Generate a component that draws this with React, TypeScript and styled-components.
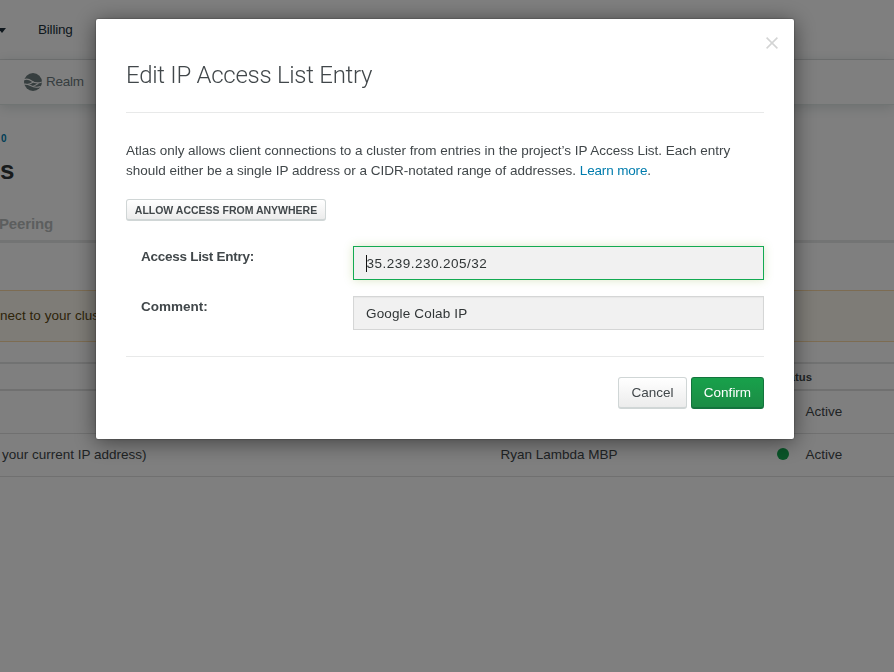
import React from "react";
import styled, { createGlobalStyle } from "styled-components";

const GlobalStyle = createGlobalStyle`
  * { box-sizing: border-box; }
  html, body { margin: 0; height: 100%; overflow: hidden; }
  body {
    background: #fff;
    color: #41474a;
    font-family: "Liberation Sans", Arial, sans-serif;
    font-size: 13.5px;
    line-height: 20px;
  }
`;

const Page = styled.div`
  width: 894px;
  height: 672px;
  overflow: hidden;
  white-space: nowrap;
`;

const TopBar = styled.header`
  display: flex;
  align-items: center;
  gap: 32px;
  height: 60px;
  border-bottom: 1px solid #e2e3e4;
  color: #21313c;
`;

const CaretDown = styled.svg`
  display: block;
  width: 6px;
  height: 5px;
  margin-top: 2px;
`;

const NavItem = styled.span`
  letter-spacing: -0.2px;
`;

const ProductBar = styled.nav`
  display: flex;
  align-items: center;
  gap: 4px;
  height: 45px;
  padding: 0 0 1px 24px;
  border-bottom: 1px solid #e0e8e6;
  box-shadow: 0 2px 12px rgba(50, 80, 80, 0.2);
  color: #6d7b80;
`;

const ProductName = styled.span`
  letter-spacing: -0.25px;
`;

const Heading = styled.section`
  display: flex;
  flex-direction: column;
  height: 138px;
  padding-top: 24px;
  border-bottom: 3px solid #e7e8e8;
`;

const Crumb = styled.span`
  height: 20px;
  padding-left: 1px;
  color: #007cad;
  font-size: 10px;
  font-weight: 700;
`;

const PageTitle = styled.h1`
  height: 28px;
  margin: 7px 0 0;
  color: #313739;
  font-size: 26px;
  font-weight: 700;
  line-height: 28px;
`;

const Tab = styled.span`
  margin: 30px 0 0 -1px;
  color: #b9bdbd;
  font-size: 15px;
  font-weight: 700;
  letter-spacing: -0.15px;
`;

const Notice = styled.div`
  margin-top: 47px;
  height: 52px;
  padding-top: 15px;
  border: solid #fbd9a5;
  border-width: 1px 0;
  background: #fdf9ee;
  color: #5c4813;
  letter-spacing: 0.05px;
`;

const Table = styled.div`
  margin-top: 20px;
  border-top: 2px solid #e3e4e4;
`;

const Row = styled.div<{ $header?: boolean }>`
  display: grid;
  grid-template-columns: 500.5px 276px 29px 1fr;
  align-items: center;
  height: ${(p) => (p.$header ? 27 : 43)}px;
  border-bottom: ${(p) => (p.$header ? 2 : 1)}px solid #e0e1e1;
`;

const HeadCell = styled.span`
  grid-column: 3 / 5;
  padding-left: 1px;
  font-size: 11.3px;
  font-weight: 700;
`;

const Cell = styled.span<{ $indent?: number }>`
  padding-left: ${(p) => p.$indent ?? 0}px;
`;

const Dot = styled.span`
  width: 12px;
  height: 12px;
  margin-top: -2px;
  border-radius: 50%;
  background: #13aa52;
`;

const Backdrop = styled.div`
  position: fixed;
  inset: 0;
  display: flex;
  align-items: flex-start;
  padding: 19px 0 0 96px;
  background: rgba(0, 0, 0, 0.5);
`;

const Dialog = styled.div`
  position: relative;
  width: 698px;
  height: 420px;
  padding: 0 30px;
  border-radius: 2px;
  background: #fff;
  box-shadow: 0 3px 22px rgba(0, 0, 0, 0.5), 0 0 2px rgba(0, 0, 0, 0.5);
`;

const CloseButton = styled.button`
  position: absolute;
  top: 18px;
  right: 16px;
  width: 12px;
  height: 12px;
  padding: 0;
  border: 0;
  background: none;
`;

const CloseIcon = styled.svg`
  display: block;
`;

const DialogHeader = styled.div`
  height: 94px;
  padding-top: 41px;
  border-bottom: 1px solid #e8e9e9;
`;

const DialogTitle = styled.h2`
  margin: 0;
  font-family: Roboto, "Liberation Sans", sans-serif;
  font-size: 24px;
  font-weight: 300;
  line-height: 30px;
  letter-spacing: -0.28px;
`;

const Description = styled.p`
  margin: 28px 0 0;
  white-space: nowrap;
`;

const Line = styled.span<{ $track: number }>`
  display: block;
  letter-spacing: ${(p) => p.$track}px;
`;

const Link = styled.a`
  color: #007cad;
  letter-spacing: -0.15px;
`;

const Button = styled.button<{ $primary?: boolean; $width: number }>`
  width: ${(p) => p.$width}px;
  height: 32px;
  padding: 0;
  border: 1px solid ${(p) => (p.$primary ? "#13743d" : "#d0d6d6")};
  border-bottom-width: 2px;
  border-radius: 3px;
  background: ${(p) =>
    p.$primary
      ? "linear-gradient(#18a14b, #1b8c45)"
      : "linear-gradient(#ffffff, #ececec)"};
  color: ${(p) => (p.$primary ? "#fff" : "#41474a")};
  font: 13.5px/28px "Liberation Sans", Arial, sans-serif;
  letter-spacing: 0;
`;

const SmallButton = styled(Button)`
  display: block;
  height: 22px;
  margin-top: 18px;
  font: 700 10.5px/18px "Liberation Sans", Arial, sans-serif;
  white-space: nowrap;
`;

const Form = styled.div`
  display: grid;
  gap: 16px;
  height: 110px;
  margin-top: 25px;
  padding-left: 15px;
  align-content: start;
`;

const Field = styled.label`
  display: grid;
  grid-template-columns: 212px 411px;
  height: 34px;
`;

const Label = styled.span<{ $track: number }>`
  padding-top: 1px;
  font-weight: 700;
  letter-spacing: ${(p) => p.$track}px;
`;

const Value = styled.span<{ $focused?: boolean; $track: number }>`
  display: flex;
  align-items: center;
  height: 34px;
  padding: 2px 12px 0;
  border: 1px solid ${(p) => (p.$focused ? "#13aa52" : "#d5d6d6")};
  background: #f1f1f1;
  box-shadow: ${(p) =>
    p.$focused
      ? "0 0 9px rgba(130, 170, 50, 0.28)"
      : "inset 0 1px 1px rgba(0, 0, 0, 0.04)"};
  color: #303536;
  letter-spacing: ${(p) => p.$track}px;
`;

const InsertionPoint = styled.span`
  width: 1px;
  height: 17px;
  margin: -2px -0.5px 0 0;
  background: #111;
`;

const Footer = styled.div`
  display: flex;
  justify-content: flex-end;
  gap: 4px;
  padding-top: 20px;
  border-top: 1px solid #e8e9e9;
`;

const RealmIcon = () => (
  <svg width="18" height="18" viewBox="0 0 18 18">
    <circle cx="9" cy="9" r="9" fill="#6d7d7e" />
    <g fill="none" stroke="#fff" strokeWidth="1.1">
      <path d="M-1 7.2C2.5 5.2 5 6 8 8.2S13.5 10.8 19 8.6" />
      <path d="M-1 11.4C2 10.6 4 11.2 6.5 12.6S12.5 15 16.5 13.4" />
      <path d="M3.5 11.2C6.5 11.2 7.5 9.6 9.6 9M8.8 13.2C11 13.2 12 11.4 14.4 10.4" />
    </g>
  </svg>
);

export default function App() {
  return (
    <>
      <GlobalStyle />
      <Page>
        <TopBar>
          <CaretDown viewBox="0 0 6 5">
            <path d="M-2 0H6L2 5Z" fill="#21313c" />
          </CaretDown>
          <NavItem>Billing</NavItem>
        </TopBar>
        <ProductBar>
          <RealmIcon />
          <ProductName>Realm</ProductName>
        </ProductBar>
        <Heading>
          <Crumb>0</Crumb>
          <PageTitle>s</PageTitle>
          <Tab>Peering</Tab>
        </Heading>
        <Notice>nect to your cluster</Notice>
        <Table>
          <Row $header>
            <HeadCell>Status</HeadCell>
          </Row>
          <Row>
            <Cell />
            <Cell />
            <Dot />
            <Cell>Active</Cell>
          </Row>
          <Row>
            <Cell $indent={2}>your current IP address)</Cell>
            <Cell>Ryan Lambda MBP</Cell>
            <Dot />
            <Cell>Active</Cell>
          </Row>
        </Table>
      </Page>
      <Backdrop>
        <Dialog role="dialog">
          <CloseButton aria-label="Close">
            <CloseIcon width="12" height="12" viewBox="0 0 12 12">
              <path d="M.6.6l10.8 10.8M11.4.6L.6 11.4" stroke="#d3d4d4" strokeWidth="1.5" />
            </CloseIcon>
          </CloseButton>
          <DialogHeader>
            <DialogTitle>Edit IP Access List Entry</DialogTitle>
          </DialogHeader>
          <Description>
            <Line $track={-0.015}>
              Atlas only allows client connections to a cluster from entries in the project’s IP Access List. Each entry
            </Line>
            <Line $track={-0.01}>
              should either be a single IP address or a CIDR-notated range of addresses. <Link>Learn more</Link>.
            </Line>
          </Description>
          <SmallButton $width={200}>ALLOW ACCESS FROM ANYWHERE</SmallButton>
          <Form>
            <Field>
              <Label $track={-0.27}>Access List Entry:</Label>
              <Value $focused $track={0.48}>
                <InsertionPoint />
                35.239.230.205/32
              </Value>
            </Field>
            <Field>
              <Label $track={0}>Comment:</Label>
              <Value $track={0.15}>Google Colab IP</Value>
            </Field>
          </Form>
          <Footer>
            <Button $width={69}>Cancel</Button>
            <Button $primary $width={73}>Confirm</Button>
          </Footer>
        </Dialog>
      </Backdrop>
    </>
  );
}
